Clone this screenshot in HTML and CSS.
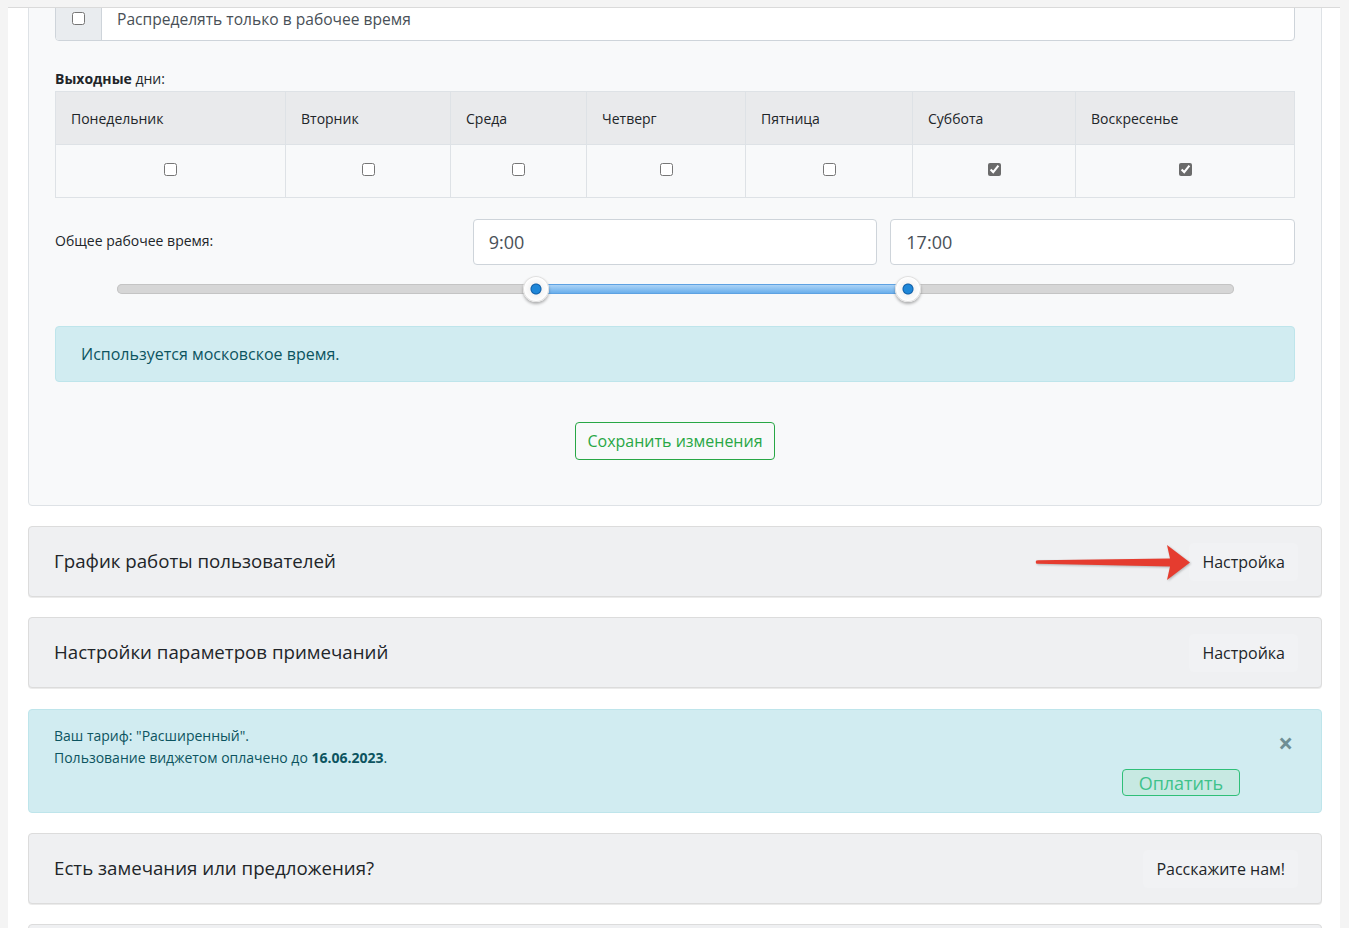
FILE: index.html
```html
<!DOCTYPE html>
<html lang="ru">
<head>
    <meta charset="UTF-8">
    <meta name="viewport" content="width=device-width, initial-scale=1.0">
    <title>Настройки виджета</title>
    <link rel="stylesheet" href="styles.css">
</head>
<body>
    <div class="top-strip"></div>
    <div class="frame">
        <div class="settings-panel">
            <div class="input-group">
                <div class="input-addon"><input type="checkbox"></div>
                <div class="input-text">Распределять только в рабочее время</div>
            </div>

            <div class="days-label"><b>Выходные</b> дни:</div>
            <table class="days-table">
                <thead>
                    <tr>
                        <th class="col-mon">Понедельник</th>
                        <th class="col-tue">Вторник</th>
                        <th class="col-wed">Среда</th>
                        <th class="col-thu">Четверг</th>
                        <th class="col-fri">Пятница</th>
                        <th class="col-sat">Суббота</th>
                        <th>Воскресенье</th>
                    </tr>
                </thead>
                <tbody>
                    <tr>
                        <td><input type="checkbox"></td>
                        <td><input type="checkbox"></td>
                        <td><input type="checkbox"></td>
                        <td><input type="checkbox"></td>
                        <td><input type="checkbox"></td>
                        <td><input type="checkbox" checked></td>
                        <td><input type="checkbox" checked></td>
                    </tr>
                </tbody>
            </table>

            <div class="time-row">
                <label class="time-label">Общее рабочее время:</label>
                <input class="time-input" type="text" value="9:00">
                <input class="time-input" type="text" value="17:00">
            </div>

            <div class="slider">
                <div class="slider-track">
                    <div class="slider-range" style="left: 37.5%; width: 33.333%;"></div>
                    <span class="slider-handle" style="left: 37.5%;"></span>
                    <span class="slider-handle" style="left: 70.833%;"></span>
                </div>
            </div>

            <div class="alert-info">Используется московское время.</div>

            <div class="save-row">
                <button class="btn-save">Сохранить изменения</button>
            </div>
        </div>

        <div class="card">
            <div class="card-title">График работы пользователей</div>
            <svg class="red-arrow" width="160" height="40" viewBox="0 0 160 40">
                <path d="M2,19 Q1,17.3 4,17.2 L136,15.6 L133,2 L156,19.5 L133,37 L136,23.4 L4,20.8 Q1,20.7 2,19 Z" fill="#e53c2f"/>
            </svg>
            <button class="btn-light">Настройка</button>
        </div>

        <div class="card">
            <div class="card-title">Настройки параметров примечаний</div>
            <button class="btn-light">Настройка</button>
        </div>

        <div class="tariff">
            <div class="tariff-text">
                Ваш тариф: "Расширенный".<br>
                Пользование виджетом оплачено до <b>16.06.2023</b>.
            </div>
            <button class="btn-pay">Оплатить</button>
            <button class="btn-close">&times;</button>
        </div>

        <div class="card">
            <div class="card-title">Есть замечания или предложения?</div>
            <button class="btn-light">Расскажите нам!</button>
        </div>

        <div class="card"></div>
    </div>
</body>
</html>
```

FILE: styles.css
```css
body {
    margin: 0;
    background-color: #f4f4f4;
    font-family: "Open Sans", "Noto Sans", sans-serif;
    color: #212529;
    font-size: 14px;
    line-height: 1.5;
}
.top-strip {
    height: 7px;
}
.frame {
    margin: 0 9px 0 8px;
    padding: 0 18px 0 20px;
    background-color: #fff;
    border-top: 1px solid #dadada;
    height: 920px;
    overflow: hidden;
}

/* first panel, scrolled up a bit */
.settings-panel {
    margin-top: -40px;
    padding: 25px 26px 45px 26px;
    background-color: #f8f9fa;
    border: 1px solid #dee2e6;
    border-radius: 4px;
}
.input-group {
    display: flex;
    height: 45px;
    border: 1px solid #ced4da;
    border-radius: 4px;
    background-color: #fff;
    overflow: hidden;
}
.input-addon {
    width: 46px;
    background-color: #e9ecef;
    border-right: 1px solid #ced4da;
    display: flex;
    justify-content: center;
    align-items: center;
    padding-top: 2px;
    box-sizing: border-box;
}
.input-addon input {
    margin: 0;
}
.input-text {
    padding: 2px 15px 0 15px;
    font-size: 15.6px;
    line-height: 45px;
    color: #495057;
}
.days-label {
    margin-top: 27px;
    margin-bottom: 2px;
}
.days-table {
    width: 100%;
    border-collapse: collapse;
}
.days-table th,
.days-table td {
    border: 1px solid #dee2e6;
    padding: 0 15px;
    height: 52px;
}
.days-table th {
    background-color: #e9eaec;
    font-weight: normal;
    text-align: left;
}
.days-table td {
    text-align: center;
}
.days-table input {
    margin: 0 0 6px 0;
    accent-color: #6b6b6b;
    vertical-align: middle;
}
.col-mon { width: 199px; }
.col-tue { width: 134px; }
.col-wed { width: 105px; }
.col-thu { width: 128px; }
.col-fri { width: 136px; }
.col-sat { width: 132px; }

.time-row {
    display: grid;
    grid-template-columns: 1fr 1fr 1fr;
    gap: 13px;
    align-items: center;
    margin-top: 21px;
}
.time-label {
    padding-bottom: 3px;
}
.time-input {
    height: 46px;
    box-sizing: border-box;
    border: 1px solid #ced4da;
    border-radius: 4px;
    padding: 0 15px;
    font-family: inherit;
    font-size: 18px;
    color: #495057;
    background-color: #fff;
}

.slider {
    padding: 19px 61px 0 62px;
}
.slider-track {
    position: relative;
    height: 10px;
    border-radius: 5px;
    background-color: #d6d6d6;
    box-shadow: inset 0 0 0 1px #c4c4c4;
}
.slider-range {
    position: absolute;
    top: 1px;
    height: 8px;
    background: linear-gradient(#acd3f6, #6aafec);
    box-shadow: 0 0 0 1px #5ea2e2;
}
.slider-handle {
    position: absolute;
    top: -8px;
    width: 26px;
    height: 26px;
    margin-left: -13px;
    border-radius: 50%;
    background: radial-gradient(circle, #1f87d8 0, #1f87d8 4px, #0f5ea8 5px, #f4f4f4 6px, #fff 12px);
    box-shadow: 0 2px 3px rgba(0, 0, 0, 0.3), inset 0 0 0 1px #e0e0e0;
}

.alert-info {
    margin-top: 32px;
    padding: 15px 25px;
    background-color: #d1ecf1;
    border: 1px solid #bee5eb;
    border-radius: 4px;
    color: #0c5460;
    font-size: 16px;
    line-height: 24px;
}
.save-row {
    margin-top: 40px;
    text-align: center;
}
.btn-save {
    height: 38px;
    padding: 0 11px;
    font-family: inherit;
    font-size: 16px;
    color: #28a745;
    background: none;
    border: 1px solid #28a745;
    border-radius: 4px;
    cursor: pointer;
}

.card {
    position: relative;
    display: flex;
    justify-content: space-between;
    align-items: center;
    height: 71px;
    box-sizing: border-box;
    margin-top: 20px;
    padding: 0 23px 0 25px;
    background-color: #eff0f2;
    border: 1px solid #dcdcdc;
    border-radius: 4px;
    box-shadow: 0 1px 0 rgba(0, 0, 0, 0.08);
}
.card-title {
    font-size: 18.7px;
}
.btn-light {
    padding: 6px 12px;
    font-family: inherit;
    font-size: 16px;
    line-height: 24px;
    color: #212529;
    background-color: #f1f2f4;
    border: 1px solid #f1f2f4;
    border-radius: 4px;
    cursor: pointer;
}
.red-arrow {
    position: absolute;
    left: 1005px;
    top: 16px;
    filter: drop-shadow(1px 1px 1px rgba(0, 0, 0, 0.25));
}

.tariff {
    display: flex;
    margin-top: 21px;
    padding: 15px 28px 16px 25px;
    background-color: #d1ecf1;
    border: 1px solid #bee5eb;
    border-radius: 4px;
    color: #0c5460;
    line-height: 22px;
}
.tariff-text {
    flex: 1;
    padding-bottom: 27px;
}
.btn-pay {
    align-self: flex-end;
    height: 27px;
    padding: 0 16px;
    font-family: inherit;
    font-size: 18px;
    line-height: 24px;
    color: #3ec28b;
    background-color: #c7e9e2;
    border: 1px solid #2fbf78;
    border-radius: 4px;
    cursor: pointer;
}
.btn-close {
    align-self: flex-start;
    margin: 8px 0 0 38px;
    padding: 0;
    font-family: inherit;
    font-size: 26px;
    font-weight: bold;
    line-height: 20px;
    color: #6f8f95;
    background: none;
    border: none;
    cursor: pointer;
}
```
